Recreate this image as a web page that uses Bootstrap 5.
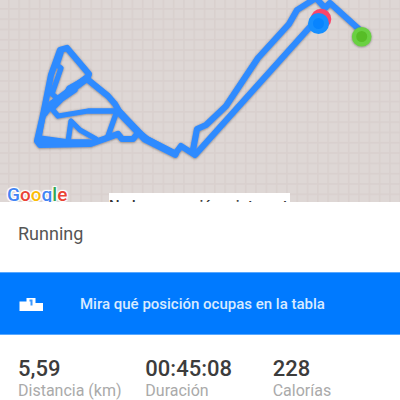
<!DOCTYPE html>
<html lang="es">
<head>
<meta charset="utf-8">
<meta name="viewport" content="width=device-width, initial-scale=1">
<title>Running</title>
<link href="https://cdn.jsdelivr.net/npm/bootstrap@5.3.0/dist/css/bootstrap.min.css" rel="stylesheet">
<style>
body{font-family:Roboto,"Liberation Sans",sans-serif;color:#555}
.track-map{height:202px;background:#ded7d5}
.map-brand{left:7px;top:182px;font-size:19px;line-height:26px;font-weight:500;text-shadow:0 0 2px #fff,1px 1px 1px #fff,-1px -1px 1px #fff,1px -1px 1px #fff,-1px 1px 1px #fff}
.g-blue{color:#4285f4}.g-red{color:#ea4335}.g-yellow{color:#fbbc05}.g-green{color:#34a853}
.map-note{left:109px;top:193px;font-size:15px;line-height:26px;font-weight:500;color:#333;padding-right:2px}
.activity{font-size:18px;line-height:24px;padding:20px 18px 26px}
.rank-link{background:#007aff;color:#d8eaff;font-size:15px;font-weight:500;line-height:24px;padding:19px 18px 18px;border:solid #58a8ff;border-width:1px 0}
.rank-icon{width:62px}
.stats{padding:21px 0 0 18px}
.stat-value{font-size:22px;line-height:26px;font-weight:500;color:#3c3c3c}
.stat-name{font-size:16px;line-height:18px;color:#aaa}
</style>
</head>
<body class="bg-white">
<main>
<section class="track-map position-relative overflow-hidden" aria-label="Recorrido">
<svg class="d-block w-100 h-100" viewBox="0 0 400 202" preserveAspectRatio="xMidYMid slice" aria-hidden="true">
<defs>
<pattern id="grid" width="10.3" height="10.3" x="8" y="8" patternUnits="userSpaceOnUse"><path d="M.8 0V10.3M0 .8H10.3" stroke="#d9d0ce" stroke-width="1.6"/></pattern>
<filter id="shade" x="-10%" y="-10%" width="120%" height="120%"><feDropShadow dx="0" dy="0.500" stdDeviation="1.3" flood-color="#444" flood-opacity=".65"/></filter>
</defs>
<rect width="400" height="202" fill="url(#grid)"/>
<g filter="url(#shade)" fill="none" stroke="#2e8bff" stroke-width="6.2" stroke-linejoin="round" stroke-linecap="round">
<path d="M361 31L330 3L325 8L316 -2L297 10L289 24L258 58L226 106L206 125L197 129L193 150"/>
<path d="M318 18L195 155L181 146L175 154L147 139L138 132L119 111L115 104L108 96L87 79L89 74L67 48L60 50L51 75L43 115L37 141L40 145L90 144L107 138L118 134L122 139L133 139L138 133"/>
<path d="M61 53L57 65L61 68L52 94L57 98L45 114M87 78L69 88L65 96L52 109L58 116L88 111L117 111L108 136M96 139L80 130L71 121L68 142L39 138L44 110M40 142H89M75 90L53 105" stroke-width="5.300"/>
<path d="M118 111L145 139L175 154M87 78L52 104" stroke-width="7.500"/>
</g>
<circle cx="321" cy="19" r="10.3" fill="#fb4569"/>
<g filter="url(#shade)"><circle cx="361.700" cy="36.700" r="9.800" fill="#6bd043"/></g>
<circle cx="361.700" cy="36.500" r="5.500" fill="#57bd27"/>
<circle cx="318.500" cy="23.500" r="10.500" fill="#168fff"/>
<circle cx="318.500" cy="23.500" r="5.500" fill="#0784ff"/>
</svg>
<div class="map-brand position-absolute"><span class="g-blue">G</span><span class="g-red">o</span><span class="g-yellow">o</span><span class="g-blue">g</span><span class="g-green">l</span><span class="g-red">e</span></div>
<div class="map-note position-absolute bg-white text-nowrap">No hay conexión a internet</div>
</section>
<h1 class="activity fw-normal m-0">Running</h1>
<a href="#tabla" class="rank-link d-flex align-items-center text-decoration-none">
<span class="rank-icon flex-shrink-0"><svg class="d-block" width="26" height="16" viewBox="0 0 26 16" aria-hidden="true"><path d="M1.500 5.500H8.500V2H17.500V7H25V15H1.500Z" fill="#fff"/><path d="M11.500 4.500H13.500V9.500" fill="none" stroke="#3d99ff" stroke-width="2"/></svg></span>
<span>Mira qué posición ocupas en la tabla</span>
</a>
<section class="stats">
<div class="row g-0">
<div class="col-4"><div class="stat-value">5,59</div><div class="stat-name text-nowrap">Distancia (km)</div></div>
<div class="col-4"><div class="stat-value">00:45:08</div><div class="stat-name">Duración</div></div>
<div class="col-4"><div class="stat-value">228</div><div class="stat-name">Calorías</div></div>
</div>
</section>
</main>
<script src="https://cdn.jsdelivr.net/npm/bootstrap@5.3.0/dist/js/bootstrap.bundle.min.js"></script>
</body>
</html>
